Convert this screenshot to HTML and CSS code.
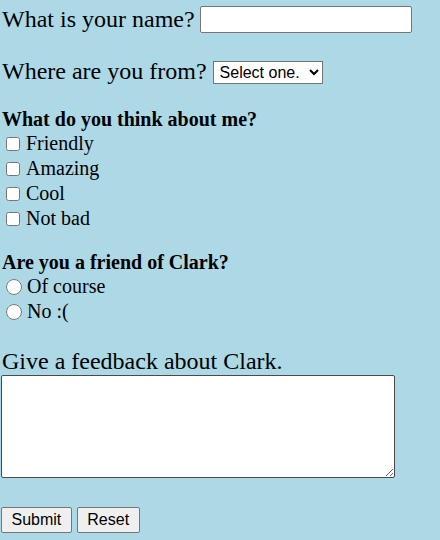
FILE: index.html
```html
<!DOCTYPE html>
<html>
<head>
<meta charset="utf-8">
<link rel="stylesheet" href="styles.css">
</head>
<body>
<form class="form">
  <div class="big-row">
    <label for="name">What is your name?</label>
    <input id="name" type="text" class="text-input">
  </div>
  <div class="big-row row-from">
    <label for="from">Where are you from?</label>
    <select id="from" class="select"><option>Select one.</option></select>
  </div>
  <div class="group group-think">
    <div class="group-title">What do you think about me?</div>
    <label class="opt"><input type="checkbox" class="box">Friendly</label>
    <label class="opt"><input type="checkbox" class="box">Amazing</label>
    <label class="opt"><input type="checkbox" class="box">Cool</label>
    <label class="opt"><input type="checkbox" class="box">Not bad</label>
  </div>
  <div class="group group-friend">
    <div class="group-title">Are you a friend of Clark?</div>
    <label class="opt"><input type="radio" name="friend" class="radio">Of course</label>
    <label class="opt"><input type="radio" name="friend" class="radio">No :(</label>
  </div>
  <div class="feedback">
    <label for="fb" class="big-label">Give a feedback about Clark.</label>
    <textarea id="fb" class="textarea"></textarea>
  </div>
  <div class="buttons">
    <button type="submit" class="btn">Submit</button>
    <button type="reset" class="btn">Reset</button>
  </div>
</form>
</body>
</html>
```
FILE: styles.css
```css
html, body {
  background: #add8e6;
}
body {
  margin: 0;
  padding: 0 1px;
  font-family: "Liberation Serif", "Times New Roman", serif;
  color: #000;
}
.form {
  display: flex;
  flex-direction: column;
}
.big-row {
  display: flex;
  align-items: center;
  gap: 5px;
  height: 38px;
  font-size: 24px;
  padding-left: 1px;
}
.row-from {
  margin-top: 14px;
  gap: 6px;
}
.text-input {
  box-sizing: border-box;
  width: 212px;
  height: 27px;
  margin: 0;
  border: 1px solid #767676;
  border-radius: 2px;
  background: #fff;
  font-size: 16px;
}
.select {
  box-sizing: border-box;
  width: 110px;
  height: 23px;
  margin: 2px 0 0;
  border: 1px solid #767676;
  border-radius: 0;
  background: #fff;
  font-family: "Liberation Sans", Arial, sans-serif;
  font-size: 16px;
  color: #000;
  padding: 0 2px;
}
.group {
  display: flex;
  flex-direction: column;
  font-size: 20px;
}
.group-think {
  margin-top: 18px;
}
.group-friend {
  margin-top: 20px;
}
.group-title {
  font-weight: bold;
  line-height: 23px;
  padding-left: 1px;
}
.opt {
  display: flex;
  align-items: center;
  height: 25px;
}
.box {
  margin: 0 6px 0 5px;
  width: 14px;
  height: 14px;
}
.radio {
  margin: 0 5px 0 5px;
  width: 16px;
  height: 16px;
}
.feedback {
  display: flex;
  flex-direction: column;
  margin-top: 23px;
}
.big-label {
  font-size: 24px;
  line-height: 28px;
  padding-left: 1px;
}
.textarea {
  box-sizing: border-box;
  width: 394px;
  height: 103px;
  margin: 0;
  border: 1px solid #4a4a4a;
  border-radius: 2px;
  background: #fff;
}
.buttons {
  display: flex;
  gap: 5px;
  margin-top: 29px;
}
.btn {
  box-sizing: border-box;
  height: 26px;
  margin: 0;
  padding: 0 9.5px;
  border: 1px solid #767676;
  border-radius: 2px;
  background: #efefef;
  font-family: "Liberation Sans", Arial, sans-serif;
  font-size: 16px;
  color: #000;
}
```
